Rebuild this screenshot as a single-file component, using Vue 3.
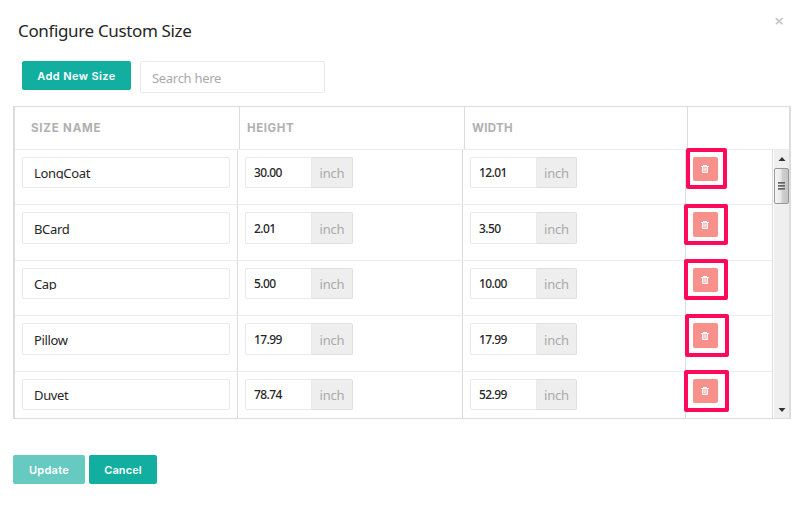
<template>
  <div class="modal">
    <div class="modal-head">
      <h4 class="title">Configure Custom Size</h4>
      <button class="close" type="button">×</button>
    </div>

    <div class="toolbar">
      <button class="btn btn-add" type="button"><span>Add New Size</span></button>
      <input v-model="search" class="search" type="text" placeholder="Search here">
    </div>

    <div class="size-table">
      <div class="table-head">
        <div class="th th-name"><span>SIZE NAME</span></div>
        <div class="th th-height"><span>HEIGHT</span></div>
        <div class="th th-width"><span>WIDTH</span></div>
        <div class="th"></div>
      </div>
      <div class="table-body">
        <div class="rows">
          <div v-for="row in rows" :key="row.name" class="row">
            <div class="td td-name">
              <div class="field name-field"><span>{{ row.name }}</span></div>
            </div>
            <div class="td">
              <div class="field unit-field">
                <div class="value">{{ row.height }}</div>
                <div class="unit"><span>inch</span></div>
              </div>
            </div>
            <div class="td td-width">
              <div class="field unit-field">
                <div class="value">{{ row.width }}</div>
                <div class="unit"><span>inch</span></div>
              </div>
            </div>
            <div class="td td-action">
              <button class="btn-delete" type="button">
                <svg width="9" height="8" viewBox="0 0 9 8">
                  <path d="M2 1V0h4v1h2v1H0V1z" fill="#fff" />
                  <path d="M1.5 2v5.5h5V2" fill="#fff" fill-opacity="0.4" stroke="#fff" />
                  <path d="M3.2 3v3M4.8 3v3" fill="none" stroke="#fff" stroke-width="0.6" />
                </svg>
              </button>
            </div>
          </div>
        </div>
        <div class="scrollbar">
          <svg class="arrow" width="8" height="4" viewBox="0 0 8 4"><path d="M0.5 4L4 0L7.5 4z" fill="#333" /></svg>
          <div class="thumb"><i></i><i></i><i></i></div>
          <svg class="arrow arrow-down" width="8" height="4" viewBox="0 0 8 4"><path d="M0.5 0L4 4L7.5 0z" fill="#333" /></svg>
        </div>
      </div>
    </div>

    <div class="footer">
      <button class="btn btn-update" type="button"><span>Update</span></button>
      <button class="btn btn-cancel" type="button"><span>Cancel</span></button>
    </div>

    <!-- Highlights over the delete buttons -->
    <div class="mark mark-1"></div>
    <div class="mark mark-2"></div>
    <div class="mark mark-3"></div>
    <div class="mark mark-4"></div>
    <div class="mark mark-5"></div>
  </div>
</template>

<script setup>
import { ref } from 'vue'

const search = ref('')

const rows = ref([
  { name: 'LongCoat', height: '30.00', width: '12.01' },
  { name: 'BCard', height: '2.01', width: '3.50' },
  { name: 'Cap', height: '5.00', width: '10.00' },
  { name: 'Pillow', height: '17.99', width: '17.99' },
  { name: 'Duvet', height: '78.74', width: '52.99' }
])
</script>

<style>
body {
  margin: 0;
  background: #fff;
}
</style>

<style scoped>
.modal {
  position: relative;
  width: 802px;
  height: 505px;
  overflow: hidden;
  box-sizing: border-box;
  padding: 0 11px 0 13px;
  font-family: "Noto Sans", "Open Sans", sans-serif;
  color: #262626;
}

.modal *,
.modal *::before {
  box-sizing: border-box;
}

.modal-head {
  display: flex;
  justify-content: space-between;
  height: 61px;
  padding: 0 7px 0 5px;
}

.title {
  margin: 19px 0 0;
  font-size: 17px;
  font-weight: 400;
  line-height: 24px;
  letter-spacing: -0.35px;
}

.close {
  height: 20px;
  margin-top: 11px;
  padding: 0;
  border: 0;
  background: none;
  color: #c4c4c4;
  font: 600 17px/20px "Open Sans", sans-serif;
}

.toolbar {
  display: flex;
  align-items: flex-start;
  gap: 9px;
  height: 45px;
  padding-left: 9px;
}

.btn {
  height: 29px;
  padding: 1px 0 0;
  border: 0;
  border-radius: 2px;
  background: #12ae9f;
  color: #fff;
  font: 600 11px/28px Inter, sans-serif;
  letter-spacing: 0.1px;
}

.btn-add {
  width: 109px;
  letter-spacing: 0.4px;
}

.search {
  width: 185px;
  height: 32px;
  padding: 2px 11px 0;
  border: 1px solid #e9e9e9;
  border-radius: 2px;
  outline: 0;
  font: 400 13px/20px "Noto Sans", sans-serif;
  letter-spacing: -0.3px;
}

.search::placeholder {
  color: #aaa;
  opacity: 1;
}

.size-table {
  height: 313px;
  border: solid #dcdcdc;
  border-width: 1px 2px 1px 2px;
}

.table-head {
  display: grid;
  grid-template-columns: 225px 225px 223px 1fr;
  height: 43px;
  border-bottom: 1px solid #ececec;
}

.th {
  padding: 0 0 0 7px;
  border-right: 1px solid #dcdcdc;
  color: #b0b0b0;
  font: 700 11.5px/42px Inter, sans-serif;
  letter-spacing: 0.6px;
}

.th:last-child {
  border-right: 0;
}

.th-name {
  padding-left: 16px;
  letter-spacing: 0.8px;
}

.th-width {
  letter-spacing: 0.3px;
}

.table-body {
  display: flex;
  height: 268px;
}

.rows {
  display: flex;
  flex-direction: column;
  width: 758px;
  border-right: 1px solid #dcdcdc;
}

.row {
  display: grid;
  grid-template-columns: 223px 225px 223px 1fr;
  height: 55px;
  border-bottom: 1px solid #ececec;
}

.row:nth-child(even) {
  height: 56px;
}

.row:last-child {
  height: 46px;
  border-bottom: 0;
}

.td {
  padding: 7px 7px 0;
  border-right: 1px solid #dcdcdc;
}

.td-action {
  border-right: 0;
}

.field {
  height: 31px;
  border: 1px solid #e9e9e9;
  border-radius: 2px;
  font-size: 13px;
}

.row:nth-child(even) .field {
  height: 32px;
}

.name-field {
  padding: 5px 0 0 11px;
  letter-spacing: -0.35px;
}

.name-field span {
  display: block;
  height: 16px;
  overflow: hidden;
  line-height: 20px;
}

.row:nth-child(even) .name-field {
  padding-top: 6px;
}

.unit-field {
  display: flex;
  width: 108px;
}

.td-width .unit-field {
  width: 107px;
}

.value {
  width: 66px;
  padding: 0 0 0 8px;
  font-size: 12px;
  font-weight: 500;
  line-height: 30px;
  letter-spacing: -0.6px;
}

.unit {
  flex: 1;
  margin: -1px;
  border: 1px solid #dfdfdf;
  border-left-color: #eaeaea;
  border-radius: 0 2px 2px 0;
  background: #eee;
  color: #aaa;
  line-height: 31px;
  letter-spacing: -0.2px;
  text-align: center;
}

.row:nth-child(even) .value {
  line-height: 32px;
}

.row:nth-child(even) .unit {
  line-height: 33px;
}

.btn-delete {
  display: flex;
  align-items: center;
  justify-content: center;
  width: 25px;
  height: 24px;
  padding: 0;
  border: 0;
  border-radius: 2px;
  background: #f8908c;
}

.row:nth-child(even) .btn-delete {
  height: 25px;
}

.scrollbar {
  display: flex;
  flex-direction: column;
  align-items: center;
  width: 15px;
  margin-left: 1px;
  padding: 7px 0 6px;
  background: #efefef;
}

.thumb {
  display: flex;
  flex-direction: column;
  align-items: center;
  justify-content: center;
  gap: 1px;
  width: 15px;
  height: 36px;
  margin-top: 7px;
  border: 1px solid #979797;
  border-radius: 2px;
  background: linear-gradient(90deg, #f5f5f5, #e8e8e8 45%, #d0d0d0 55%, #c4c4c4);
}

.thumb i {
  width: 7px;
  height: 2px;
  background: linear-gradient(#555, #999);
}

.arrow-down {
  margin-top: auto;
}

.footer {
  display: flex;
  gap: 4px;
  margin-top: 36px;
}

.btn-update {
  width: 72px;
  background: #66cac1;
  letter-spacing: 0.3px;
}

.btn-cancel {
  width: 68px;
}

.mark {
  position: absolute;
  border: 4px solid #ff0a5b;
  border-radius: 2px;
}

.mark-1 {
  left: 686px;
  top: 148px;
  width: 41px;
  height: 41px;
}

.mark-2 {
  left: 684px;
  top: 204px;
  width: 44px;
  height: 41px;
}

.mark-3 {
  left: 684px;
  top: 259px;
  width: 44px;
  height: 41px;
}

.mark-4 {
  left: 685px;
  top: 314px;
  width: 44px;
  height: 43px;
}

.mark-5 {
  left: 684px;
  top: 370px;
  width: 45px;
  height: 42px;
}
</style>
